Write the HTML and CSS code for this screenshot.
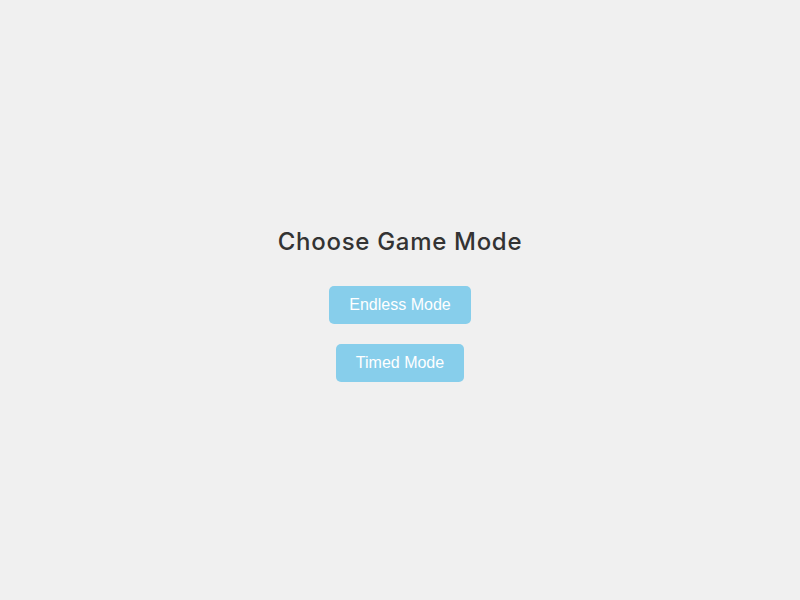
FILE: index.html
```html
<!DOCTYPE html>
<html lang="en">
<head>
<meta charset="utf-8">
<title>Choose Game Mode</title>
<link rel="stylesheet" href="styles.css">
</head>
<body>
<main class="menu">
  <h2 class="menu-title">Choose Game Mode</h2>
  <button class="mode-btn" type="button">Endless Mode</button>
  <button class="mode-btn" type="button">Timed Mode</button>
</main>
</body>
</html>
```
FILE: styles.css
```css
html, body {
  margin: 0;
  padding: 0;
  height: 100%;
}
body {
  background: #f0f0f0;
  font-family: "Liberation Sans", Arial, sans-serif;
}
.menu {
  height: 100%;
  display: flex;
  flex-direction: column;
  align-items: center;
  justify-content: center;
}
.menu-title {
  margin: 18px 0 20px;
  font-family: Inter, "Open Sans", sans-serif;
  font-weight: 500;
  font-size: 24px;
  line-height: 29px;
  color: #333;
  letter-spacing: 0.7px;
}
.mode-btn {
  margin: 10px 0;
  padding: 10px 20px;
  border: none;
  border-radius: 5px;
  background: #87ceeb;
  color: #fff;
  font-family: "Liberation Sans", Arial, sans-serif;
  font-size: 16px;
  line-height: 18px;
  cursor: pointer;
}
```
